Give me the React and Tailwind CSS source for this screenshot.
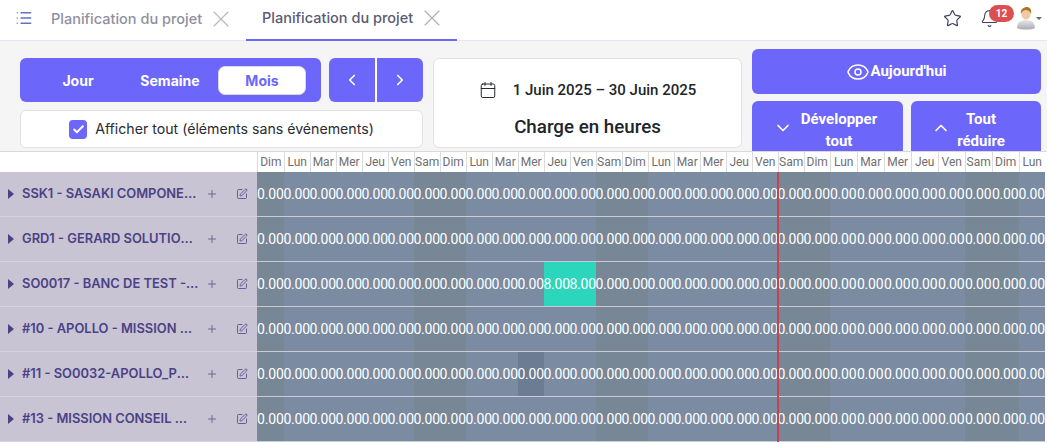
import React from 'react';
import { Check, ChevronDown, ChevronLeft, ChevronRight, ChevronUp, Eye, List, Plus, SquarePen, Star, Bell, X, Calendar } from 'lucide-react';

const inter = 'font-["Inter",sans-serif]';
const roboto = 'font-["Roboto",sans-serif]';
const names = ['Dim', 'Lun', 'Mar', 'Mer', 'Jeu', 'Ven', 'Sam'];
const days = Array.from({ length: 30 }, (_, i) => names[i % 7]);
const rows = [
  'SSK1 - SASAKI COMPONENTS',
  'GRD1 - GERARD SOLUTIONS SAS',
  'SO0017 - BANC DE TEST - ESSAIS',
  '#10 - APOLLO - MISSION CONSEIL',
  '#11 - SO0032-APOLLO_PMO_2025',
  '#13 - MISSION CONSEIL WEB',
];
const gridCols = 'grid-cols-[26.7px_repeat(21,26px)_repeat(7,27px)_26px]';
const weekend = (i) => i % 7 === 0 || i % 7 === 6;

function Cell({ row, i }) {
  const green = row === 2 && (i === 11 || i === 12);
  const dark = row === 4 && i === 10;
  const bg = green ? 'bg-[#2bd6bd]' : dark ? 'bg-[#6c7c92]' : weekend(i) ? 'bg-[#788796]' : 'bg-[#7b8ca2]';
  return (
    <div className={`${bg} flex items-center justify-center whitespace-nowrap text-[14px] font-normal tracking-[-0.2px] text-white leading-none`}>
      <span className="relative z-10">{green ? '8.00' : '0.00'}</span>
    </div>
  );
}

function Avatar() {
  return (
    <svg width="20" height="24" viewBox="0 0 20 24">
      <defs>
        <linearGradient id="b" x1="0" y1="0" x2="0" y2="1">
          <stop offset="0" stopColor="#e8e8ec" />
          <stop offset="1" stopColor="#a9abb2" />
        </linearGradient>
      </defs>
      <path d="M1 22c0-6 4-8 9-8s9 2 9 8c-3 2-15 2-18 0z" fill="url(#b)" />
      <ellipse cx="10" cy="8" rx="4.6" ry="5.6" fill="#f0c9a0" />
      <path d="M5 8C4 3 8 1 11 1c3 0 5 3 4 7-1-3-3-4-5-4S6 5 5 8z" fill="#a9772c" />
    </svg>
  );
}

export default function App() {
  return (
    <div className={`w-[1047px] h-[444px] overflow-hidden bg-white ${roboto}`}>
      <header className="h-[41px] flex items-center border-b border-[#e6e4f6] bg-white">
        <List className="ml-[15px] mb-[5px] text-[#5f74bc]" size={18} strokeWidth={1.7} />
        <div className={`ml-[18px] w-[195px] h-[41px] flex items-center ${inter} text-[14.5px] font-medium text-[#8f8f9e] pb-[3px]`}>
          <span>Planification du projet</span>
          <X className="ml-[5px] text-[#b9b9c2]" size={28} strokeWidth={1} />
        </div>
        <div className={`w-[211px] h-[41px] pl-[16px] flex items-center ${inter} text-[14.5px] font-medium text-[#5a5a72] pb-[3px] border-b-2 border-[#6c66fb]`}>
          <span>Planification du projet</span>
          <X className="ml-[5px] text-[#b0b0ba]" size={28} strokeWidth={1} />
        </div>
        <div className="ml-auto flex items-center pr-[5px] pb-[4px]">
          <Star className="text-[#3d4466]" size={19} strokeWidth={1.5} />
          <div className="relative ml-[18px] mr-[17px]">
            <Bell className="text-[#3d4466]" size={19} strokeWidth={1.4} />
            <span className="absolute -top-[4px] left-[9px] w-[25px] h-[17px] rounded-full bg-[#dc4f51] text-white text-[10px] font-bold flex items-center justify-center">12</span>
          </div>
          <Avatar />
          <span className="w-0 h-0 border-x-[3px] border-x-transparent border-t-[3px] border-t-[#667]" />
        </div>
      </header>

      <section className="h-[110px] bg-[#f5f5f5] flex overflow-hidden pl-[20px]">
        <div className="w-[403px] pt-[17px] flex flex-col gap-[8px]">
          <div className="flex gap-[8px]">
            <div className={`w-[301px] h-[44px] rounded-[6px] bg-[#6c66fb] pl-[14px] flex items-center gap-[4px] ${inter} text-[14px] font-bold text-white`}>
              <span className="w-[88px] text-center">Jour</span>
              <span className="w-[88px] text-center">Semaine</span>
              <span className="w-[88px] h-[29px] rounded-[7px] bg-white border border-[#d8d8dd] text-[#6c66fb] flex items-center justify-center">Mois</span>
            </div>
            <div className="w-[94px] h-[44px] rounded-[6px] bg-[#6c66fb] flex text-white">
              <span className="w-[48px] border-r-2 border-white flex items-center justify-center"><ChevronLeft size={18} strokeWidth={2.2} /></span>
              <span className="w-[46px] flex items-center justify-center"><ChevronRight size={18} strokeWidth={2.2} /></span>
            </div>
          </div>
          <label className={`h-[38px] rounded-[6px] bg-white border border-[#e2e2e6] flex items-center justify-center gap-[8px] ${inter} text-[14.15px] text-[#2b2b33]`}>
            <span className="w-[18px] h-[19px] rounded-[4px] bg-[#6c66fb] flex items-center justify-center text-white"><Check size={13} strokeWidth={3.5} /></span>
            <span>Afficher tout (éléments sans événements)</span>
          </label>
        </div>

        <div className="ml-[10px] mt-[17px] w-[309px] h-[90px] rounded-[6px] bg-white border border-[#e2e2e6] flex flex-col items-center text-[#212529]">
          <div className="mt-[21px] h-[20px] flex items-center text-[15px] font-medium">
            <Calendar className="mr-[16px]" size={18} strokeWidth={1.3} />
            <span>1 Juin 2025 – 30 Juin 2025</span>
          </div>
          <div className="mt-[15px] text-[18.75px] font-medium leading-[24px]">Charge en heures</div>
        </div>

        <div className="ml-[10px] pt-[8px] w-[289px] flex flex-col gap-[7px] text-white text-[15px] font-bold">
          <div className="h-[45px] shrink-0 rounded-[6px] bg-[#6c66fb] flex items-center justify-center">
            <Eye size={24} strokeWidth={1.5} />
            <span>Aujourd'hui</span>
          </div>
          <div className="flex gap-[8px] shrink-0">
            <div className="w-[151px] h-[60px] rounded-t-[6px] bg-[#6c66fb] flex pl-[21px] pt-[7px]">
              <ChevronDown className="mt-[10px]" size={20} strokeWidth={2} />
              <span className="ml-[4px] w-[84px] text-center leading-[22px]">Développer tout</span>
            </div>
            <div className="w-[130px] h-[60px] rounded-t-[6px] bg-[#6c66fb] flex pl-[20px] pt-[7px]">
              <ChevronUp className="mt-[10px]" size={20} strokeWidth={2} />
              <span className="w-[60px] text-center leading-[22px]">Tout réduire</span>
            </div>
          </div>
        </div>
      </section>

      <section className="relative border-t border-[#d9d9d9]">
        <div className="flex h-[20px]">
          <div className="w-[257px] shrink-0" />
          <div className={`grid ${gridCols}`}>
            {days.map((d, i) => (
              <div key={i} className="border-l border-[#dcdcdc] flex items-center justify-center text-[12px] text-[#6f6f6f] bg-white">{d}</div>
            ))}
          </div>
        </div>
        {rows.map((name, r) => (
          <div key={r} className="flex h-[45px]">
            <div className={`w-[257px] shrink-0 bg-[#c8c4d4] border-b border-[#d6d3dc] flex items-center pl-[8px] ${inter} text-[#4b4284]`}>
              <span className="w-0 h-0 border-y-[5px] border-y-transparent border-l-[6px] border-l-[#4b4284] mr-[8px]" />
              <span className="w-[177px] truncate text-[12.9px] font-semibold">{name}</span>
              <Plus className="ml-[7px] text-[#6e6694]" size={12} strokeWidth={2} />
              <SquarePen className="ml-[18px] text-[#5a5290]" size={12} strokeWidth={1.8} />
            </div>
            <div className={`grid ${gridCols} border-b border-[#c9cdd3]`}>
              {days.map((_, i) => <Cell key={i} row={r} i={i} />)}
            </div>
          </div>
        ))}
        <div className="absolute z-20 left-[777px] top-[20px] w-[2px] h-[270px] bg-[#c4434f]" />
      </section>
    </div>
  );
}
